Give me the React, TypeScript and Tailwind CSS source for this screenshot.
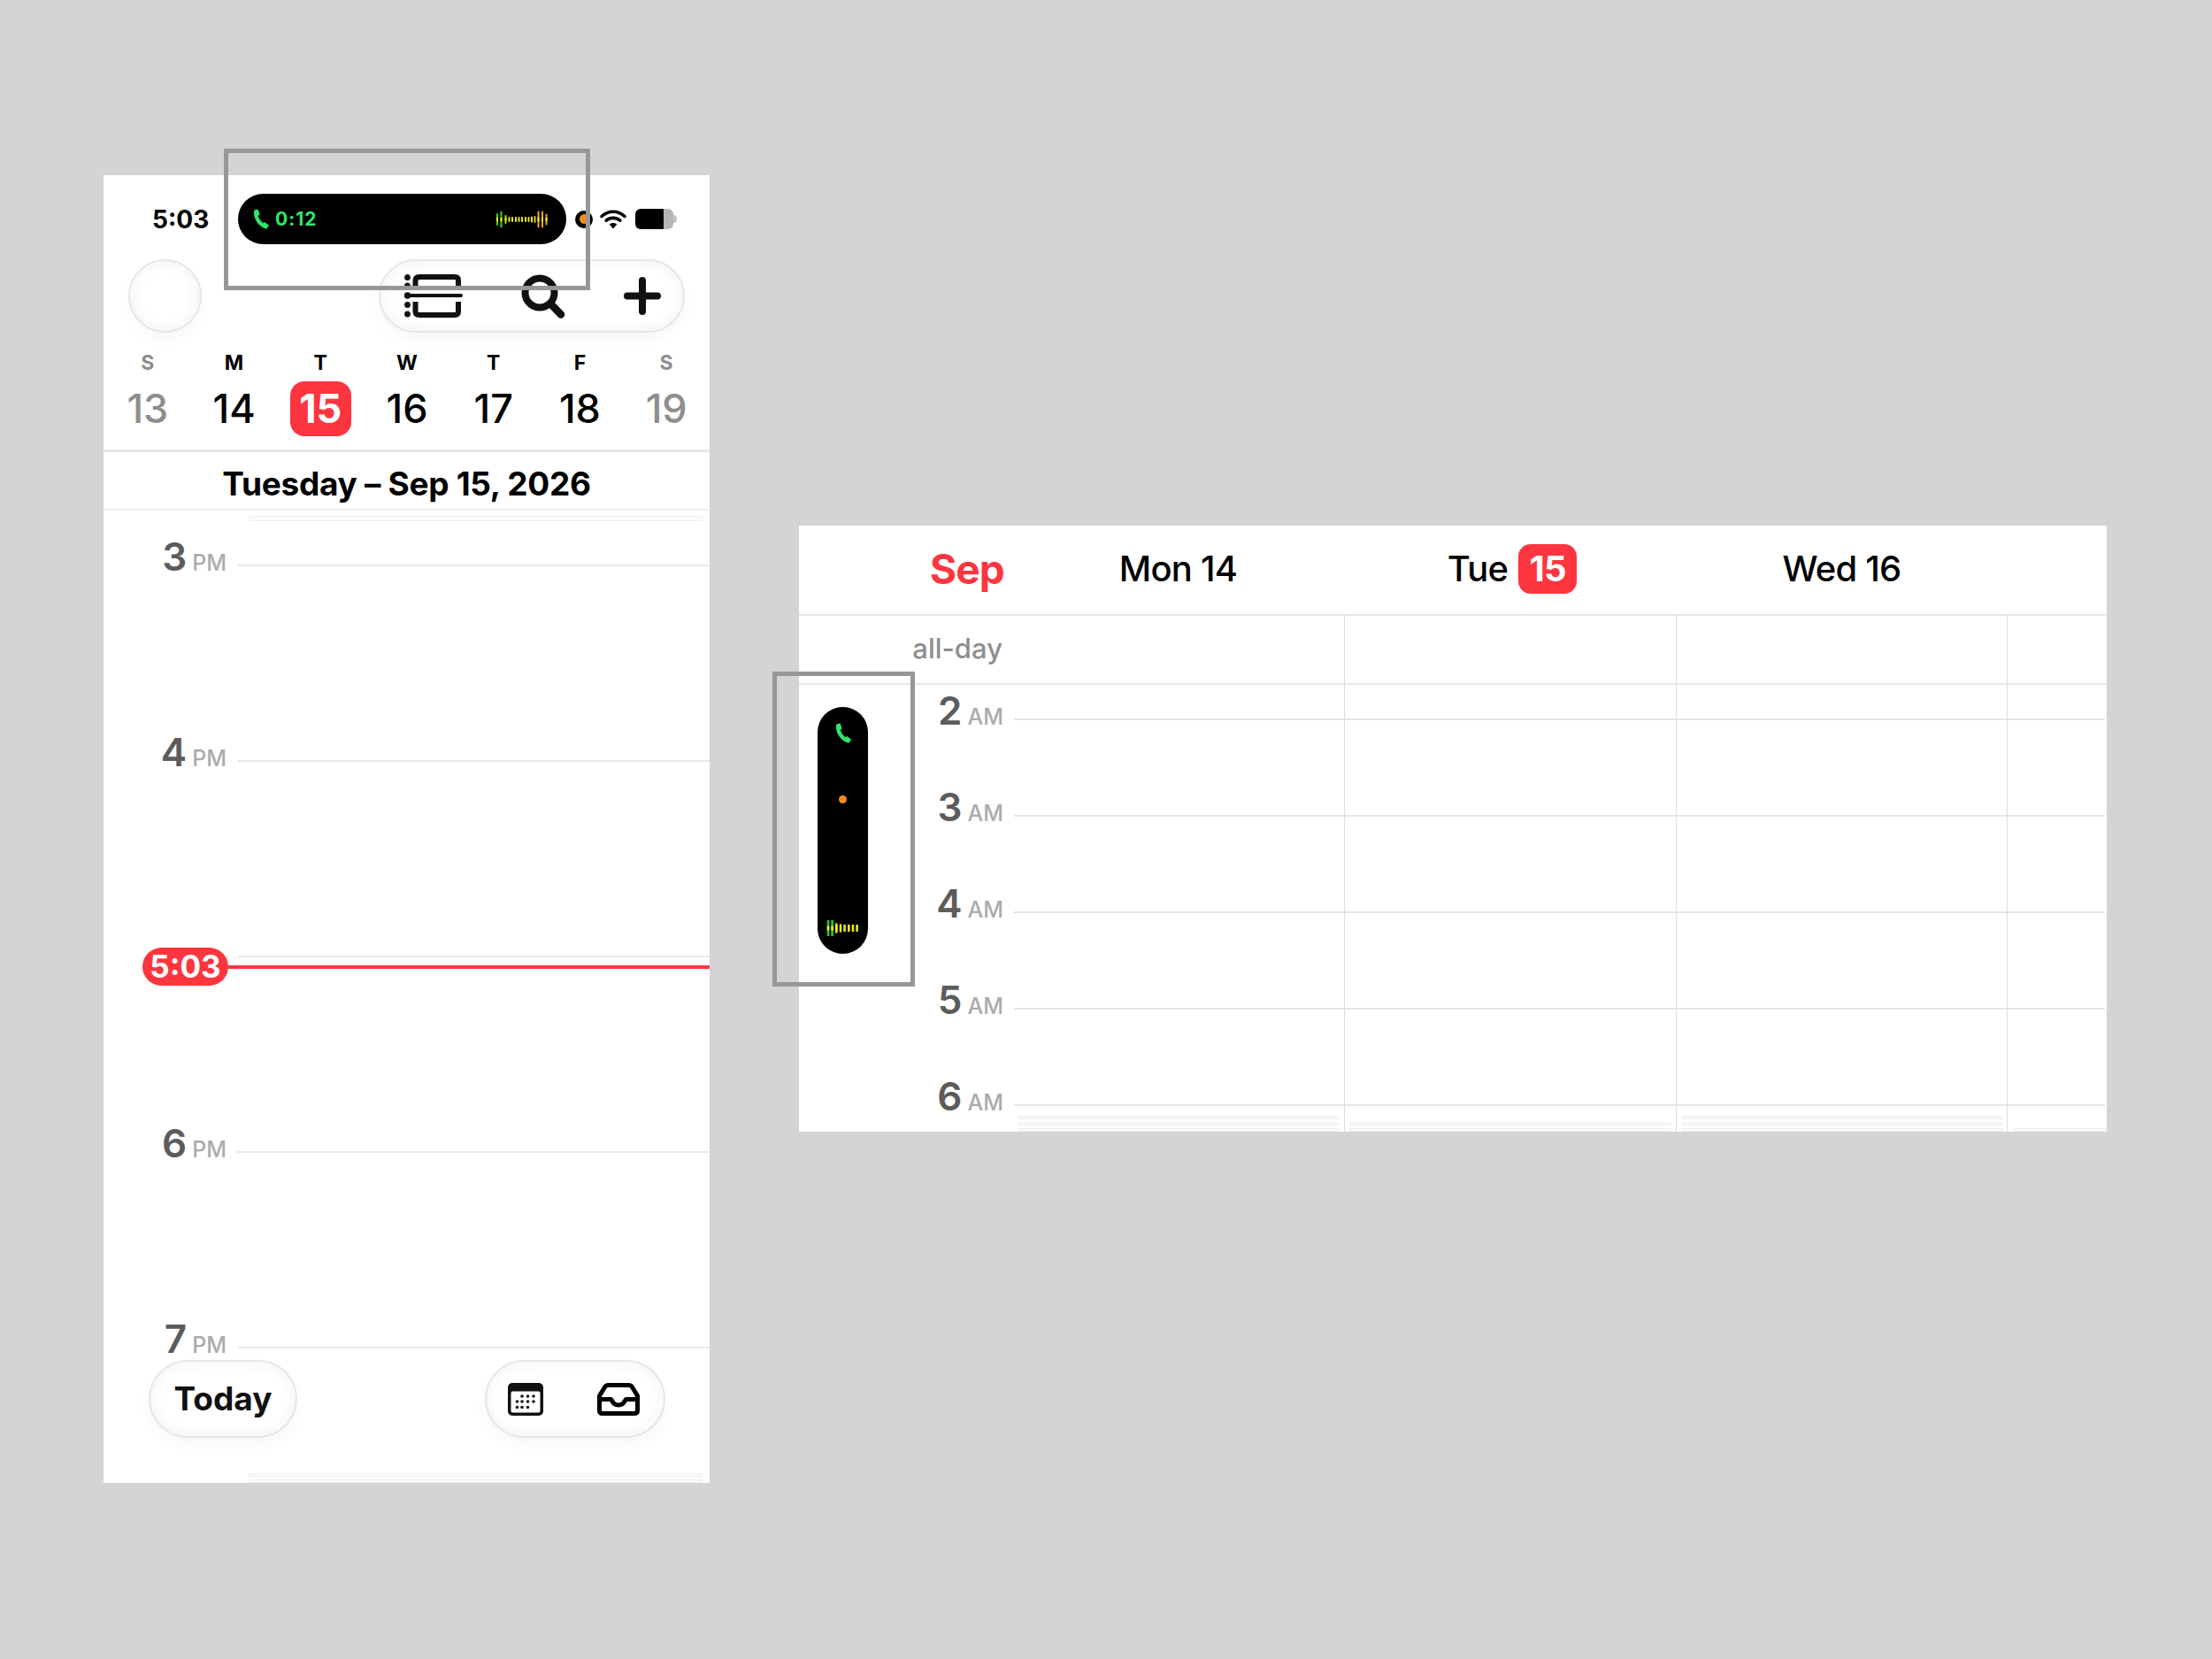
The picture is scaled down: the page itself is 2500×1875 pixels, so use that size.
const GREEN = "#2fe768";

function PhoneIcon({ className }: { className: string }) {
  return (
    <svg viewBox="0 0 18 23" className={className}>
      <path d="M3.2 3 C2.2 9 6.5 17 13.5 20" fill="none" stroke={GREEN} strokeWidth="4.2" strokeLinecap="round" />
      <path d="M2 2.2 L5.2 1 L7.2 6.5 L4 8 Z M11 19 L13 15.6 L17.4 18.6 L15.2 22.4 Z" fill={GREEN} stroke={GREEN} strokeWidth="1" strokeLinejoin="round" />
    </svg>
  );
}

function Waveform() {
  const bars = [
    [2, 12, "#2fd62f", 5], [6.5, 17, "#35d41f", 4], [11.5, 8, "#b8e21a", 3],
    [15.5, 4, "#e8e81a", 0], [19, 4, "#e8e81a", 0], [23, 4, "#e8e81a", 0], [26.5, 4, "#e8e81a", 0],
    [30, 4, "#e8e81a", 0], [34, 4, "#e8e81a", 0], [37.5, 4, "#e8e81a", 0], [41, 5, "#e8e81a", 0],
    [44.5, 6, "#e8c81a", 0], [48.5, 17, "#f0a41a", 5], [53, 17, "#f0a41a", 5], [57.5, 11, "#f0a41a", 4],
  ] as const;
  return (
    <svg viewBox="0 0 61 20" className="w-[61px] h-[20px]">
      {bars.map(([x, h, c, inner], i) => (
        <g key={i}>
          <line x1={x} x2={x} y1={10 - h / 2} y2={10 + h / 2} stroke={c} strokeWidth="2" strokeLinecap="round" />
          {inner > 0 && <line x1={x} x2={x} y1={10 - inner / 2} y2={10 + inner / 2} stroke="#f0ee1a" strokeWidth="2" />}
        </g>
      ))}
    </svg>
  );
}

function SmallWaveform() {
  const bars = [[2, 17], [6.6, 17], [11.3, 9], [16, 7], [20.6, 6], [25.3, 6], [30, 6], [34.6, 6]];
  return (
    <svg viewBox="0 0 37 18" className="w-[37px] h-[18px]">
      {bars.map(([x, h], i) => (
        <g key={i}>
          <line x1={x} x2={x} y1={9 - h / 2} y2={9 + h / 2} stroke={i < 2 ? "#22cf1f" : "#e4ea14"} strokeWidth="2.6" strokeLinecap="round" />
          {i < 3 && <line x1={x} x2={x} y1={6.5} y2={11.5} stroke="#f2ee14" strokeWidth="2.6" />}
        </g>
      ))}
    </svg>
  );
}

function WifiIcon() {
  return (
    <svg viewBox="0 0 30 23" className="w-[30px] h-[23px] ml-[8px]">
      <path d="M2 8.5 C9.5 1.5 20.5 1.5 28 8.5" fill="none" stroke="#000" strokeWidth="3.6" strokeLinecap="round" />
      <path d="M7.2 13.2 C11.8 9.4 18.2 9.4 22.8 13.2" fill="none" stroke="#000" strokeWidth="3.6" strokeLinecap="round" />
      <path d="M10.8 17.6 C13.2 15.6 16.8 15.6 19.2 17.6 L15 22.6 Z" fill="#000" />
    </svg>
  );
}

function ListIcon() {
  return (
    <svg viewBox="0 0 66 50" className="w-[66px] h-[50px]">
      <g fill="#111">
        <ellipse cx="3.5" cy="3.5" rx="3.4" ry="3.5" />
        <ellipse cx="3.5" cy="13" rx="3.4" ry="3.5" />
        <ellipse cx="3.5" cy="34.5" rx="3.4" ry="3.5" />
        <ellipse cx="3.5" cy="45" rx="3.4" ry="3.5" />
        <ellipse cx="3.5" cy="24" rx="3.8" ry="3.8" />
      </g>
      <path d="M3 24 H64" stroke="#111" strokeWidth="4" strokeLinecap="round" />
      <path d="M12.5 17 V7 Q12.5 3 17 3 H57 Q61 3 61 7 V17" fill="none" stroke="#111" strokeWidth="6" />
      <path d="M12.5 31 V42 Q12.5 46 17 46 H57 Q61 46 61 42 V31" fill="none" stroke="#111" strokeWidth="6" />
    </svg>
  );
}

function SearchIcon() {
  return (
    <svg viewBox="0 0 50 50" className="w-[50px] h-[50px]">
      <circle cx="21" cy="21" r="16.5" fill="none" stroke="#111" strokeWidth="8" />
      <path d="M33 33 L45 45.5" stroke="#111" strokeWidth="8.5" strokeLinecap="round" />
    </svg>
  );
}

function PlusIcon() {
  return (
    <svg viewBox="0 0 42 43" className="w-[42px] h-[43px]">
      <path d="M21 4 V39 M4 21.5 H38" stroke="#111" strokeWidth="8" strokeLinecap="round" />
    </svg>
  );
}

function CalendarIcon() {
  const dots = [
    [15, 15], [21.5, 15], [28, 15],
    [9.5, 21], [15, 21], [21.5, 21], [28, 21],
    [9.5, 27.5], [15, 27.5], [21.5, 27.5],
  ];
  return (
    <svg viewBox="0 0 40 37" className="w-[40px] h-[37px]">
      <rect width="40" height="37" rx="5" fill="#111" />
      <rect x="3.5" y="9.5" width="33" height="24" rx="2" fill="#fff" />
      {dots.map(([x, y], i) => (
        <circle key={i} cx={x + 1} cy={y} r="1.8" fill="#111" />
      ))}
    </svg>
  );
}

function InboxIcon() {
  return (
    <svg viewBox="0 0 48 37" className="w-[48px] h-[37px]">
      <path d="M12 2.5 H36 Q38 2.5 39 4 L45.5 14.5 V31 Q45.5 34.5 42 34.5 H6 Q2.5 34.5 2.5 31 V14.5 L9 4 Q10 2.5 12 2.5 Z" fill="none" stroke="#000" strokeWidth="5" strokeLinejoin="round" />
      <path d="M2.5 18.5 H15.5 C17 18.5 16.5 25 24 25 C31.5 25 31 18.5 32.5 18.5 H45.5" fill="none" stroke="#000" strokeWidth="5" />
    </svg>
  );
}

function GlassPill({ className, children }: { className: string; children?: React.ReactNode }) {
  return (
    <div className={`flex items-center rounded-full border-2 border-[#e6e6e6] bg-white shadow-[inset_0_0_18px_rgba(0,0,0,0.06),0_8px_16px_rgba(0,0,0,0.03)] ${className}`}>
      {children}
    </div>
  );
}

function FaintBar({ className }: { className: string }) {
  return <div className={`rounded-full border border-[#eeeeee] bg-[#fafafa] ${className}`} />;
}

function TimeLabel({ hour, part, width }: { hour: number; part: string; width: string }) {
  return (
    <div className={`-mb-[5px] flex items-baseline justify-end gap-[6px] leading-none ${width}`}>
      <span className="text-[44px] font-semibold text-[#5c5c5c]">{hour}</span>
      <span className="text-[25px] font-medium text-[#ababab]">{part}</span>
    </div>
  );
}

function PhoneRow({ hour, height }: { hour?: number; height: string }) {
  return (
    <div className={`flex items-end ${height}`}>
      {hour ? <TimeLabel hour={hour} part="PM" width="w-[139px]" /> : <div className="w-[139px]" />}
      <div className="ml-[12px] mb-[6px] h-[2px] flex-1 bg-[#e9e9e9]" />
    </div>
  );
}

function DesktopRow({ hour, height }: { hour: number; height: string }) {
  return (
    <div className={`flex items-end ${height}`}>
      <TimeLabel hour={hour} part="AM" width="w-[231px]" />
      <div className="ml-[12px] mr-[2px] mb-[6px] h-[2px] flex-1 bg-[#e6e6e6]" />
    </div>
  );
}

const week = [
  { letter: "S", day: 13, muted: true },
  { letter: "M", day: 14 },
  { letter: "T", day: 15, today: true },
  { letter: "W", day: 16 },
  { letter: "T", day: 17 },
  { letter: "F", day: 18 },
  { letter: "S", day: 19, muted: true },
];

function PhoneView() {
  return (
    <div className="relative flex h-[1478px] w-[685px] shrink-0 flex-col bg-white">
      {/* status bar */}
      <div className="mt-[21px] flex h-[57px] items-center">
        <div className="w-[152px] pl-[55px] text-[28px] font-bold text-black">5:03</div>
        <div className="flex h-[57px] w-[371px] items-center rounded-full bg-black pl-[17px] pr-[19px]">
          <PhoneIcon className="h-[23px] w-[18px]" />
          <span className="ml-[7px] text-[21px] font-bold tracking-[1px] text-[#2fe768]">0:12</span>
          <div className="ml-auto">
            <Waveform />
          </div>
        </div>
        <div className="ml-[10px] flex h-[20px] w-[20px] items-center justify-center rounded-full bg-black">
          <div className="h-[11px] w-[11px] rounded-full bg-[#f08c1e]" />
        </div>
        <WifiIcon />
        <div className="ml-[10px] flex h-[23px] w-[43px] overflow-hidden rounded-[6px]">
          <div className="w-[32px] bg-black" />
          <div className="flex-1 bg-[#b5b5b5]" />
        </div>
        <div className="h-[9px] w-[4px] rounded-r-full bg-[#c4c4c4]" />
      </div>

      {/* toolbar */}
      <div className="mt-[17px] flex justify-between pl-[28px] pr-[28px]">
        <GlassPill className="h-[83px] w-[83px]" />
        <GlassPill className="h-[83px] w-[346px] justify-between pl-[27px] pr-[25px]">
          <ListIcon />
          <SearchIcon />
          <PlusIcon />
        </GlassPill>
      </div>

      {/* week strip */}
      <div className="mt-[19px] grid grid-cols-7 pl-[1px]">
        {week.map((d, i) => (
          <div key={i} className="flex flex-col items-center">
            <span className={`h-[30px] text-[23px] font-bold leading-[30px] ${d.muted ? "text-[#8e8e8e]" : "text-black"}`}>{d.letter}</span>
            <span
              className={`mt-[6px] flex h-[62px] w-[69px] items-center justify-center rounded-[16px] pb-[2px] text-[45px] leading-none ${
                d.today ? "bg-[#fd353f] font-bold text-white" : d.muted ? "font-medium text-[#8e8e8e]" : "font-medium text-black"
              }`}
            >
              {d.day}
            </span>
          </div>
        ))}
      </div>
      <div className="mt-[15px] h-[3px] bg-[#e6e6e6]" />

      <div className="flex h-[65px] items-center justify-center pt-[8px] text-[37px] font-bold tracking-[-0.3px] text-black">
        Tuesday – Sep 15, 2026
      </div>
      <div className="h-[2px] bg-[#efefef]" />
      <FaintBar className="ml-[163px] mr-[6px] mt-[6px] h-[6px]" />

      {/* hours */}
      <div className="relative">
        <PhoneRow hour={3} height="h-[57px]" />
        <PhoneRow hour={4} height="h-[221px]" />
        <PhoneRow height="h-[221px]" />
        <PhoneRow hour={6} height="h-[221px]" />
        <PhoneRow hour={7} height="h-[221px]" />
        {/* now marker */}
        <div className="absolute left-[44px] right-0 top-[482px] flex items-center">
          <div className="flex h-[43px] w-[97px] items-center justify-center rounded-full bg-[#fd353f] text-[35px] font-bold leading-none text-white">
            5:03
          </div>
          <div className="h-[4px] flex-1 bg-[#fd353f]" />
        </div>
      </div>

      {/* bottom bar */}
      <div className="mt-[7px] flex justify-between pl-[51px] pr-[50px]">
        <GlassPill className="h-[88px] w-[168px] justify-center text-[37px] font-bold text-[#111]">
          Today
        </GlassPill>
        <GlassPill className="h-[88px] w-[204px] justify-between pl-[24px] pr-[27px]">
          <CalendarIcon />
          <InboxIcon />
        </GlassPill>
      </div>
      <div className="mt-[40px] flex flex-col gap-[3px] pl-[163px] pr-[8px]">
        <FaintBar className="h-[4px]" />
        <FaintBar className="h-[4px]" />
      </div>
    </div>
  );
}

const bottomBars = [
  { cell: "pl-[6px] pr-[5px]", rows: [true, true, true] },
  { cell: "pl-[6px] pr-[5px]", rows: [false, true, true] },
  { cell: "pl-[6px] pr-[5px]", rows: [true, true, true] },
  { cell: "pl-[6px]", rows: [false, false, true] },
];

function DesktopView() {
  return (
    <div className="relative ml-[101px] mt-[396px] h-[685px] w-[1478px] shrink-0 bg-white">
      <div className="flex h-[100px] items-center pb-[2px] text-center text-[40px] font-medium tracking-[-0.8px] text-black">
        <div className="w-[241px] pr-[9px] text-right text-[46px] font-bold text-[#fd353f]">Sep</div>
        <div className="w-[375px]">Mon 14</div>
        <div className="flex w-[375px] items-center justify-center gap-[12px] pl-[5px]">
          Tue
          <span className="flex h-[56px] w-[66px] items-center justify-center rounded-[14px] bg-[#fd353f] font-bold text-white">15</span>
        </div>
        <div className="w-[375px]">Wed 16</div>
      </div>
      <div className="h-[2px] bg-[#e8e8e8]" />
      <div className="flex h-[76px] items-center justify-end pb-[2px] pr-[1248px] text-[31px] font-medium text-[#8e8e8e]">
        all-day
      </div>
      <div className="h-[2px] bg-[#e8e8e8]" />

      <DesktopRow hour={2} height="h-[46px]" />
      <DesktopRow hour={3} height="h-[109px]" />
      <DesktopRow hour={4} height="h-[109px]" />
      <DesktopRow hour={5} height="h-[109px]" />
      <DesktopRow hour={6} height="h-[109px]" />

      <div className="mt-[5px] grid grid-cols-[375px_375px_375px_1fr] pl-[241px]">
        {bottomBars.map((col, i) => (
          <div key={i} className={`flex flex-col gap-[3px] ${col.cell}`}>
            {col.rows.map((on, j) => (
              <FaintBar key={j} className={on ? "h-[4px]" : "invisible h-[4px]"} />
            ))}
          </div>
        ))}
      </div>

      {/* column lines */}
      <div className="absolute bottom-0 left-[616px] right-0 top-[100px] flex">
        <div className="w-[375px] border-l border-[#dcdcdc]" />
        <div className="w-[374px] border-l border-[#dcdcdc]" />
        <div className="flex-1 border-l border-[#dcdcdc]" />
      </div>

      {/* collapsed island */}
      <div className="absolute left-[21px] top-[205px] flex h-[279px] w-[57px] flex-col items-center rounded-full bg-black">
        <PhoneIcon className="mt-[18px] h-[23px] w-[18px]" />
        <div className="mt-[59px] h-[9px] w-[9px] rounded-full bg-[#f08c1e]" />
        <div className="mt-auto mb-[20px]">
          <SmallWaveform />
        </div>
      </div>
    </div>
  );
}

export default function App() {
  return (
    <div className="relative flex h-[1875px] w-[2500px] items-start overflow-hidden bg-[#d4d4d4] pl-[117px] pt-[198px] font-['Inter','Liberation_Sans',sans-serif]">
      <PhoneView />
      <DesktopView />
      {/* callout frames */}
      <div className="absolute left-[253px] top-[168px] h-[160px] w-[414px] border-[5px] border-[#979797]" />
      <div className="absolute left-[873px] top-[759px] h-[356px] w-[161px] border-[5px] border-[#979797]" />
    </div>
  );
}
